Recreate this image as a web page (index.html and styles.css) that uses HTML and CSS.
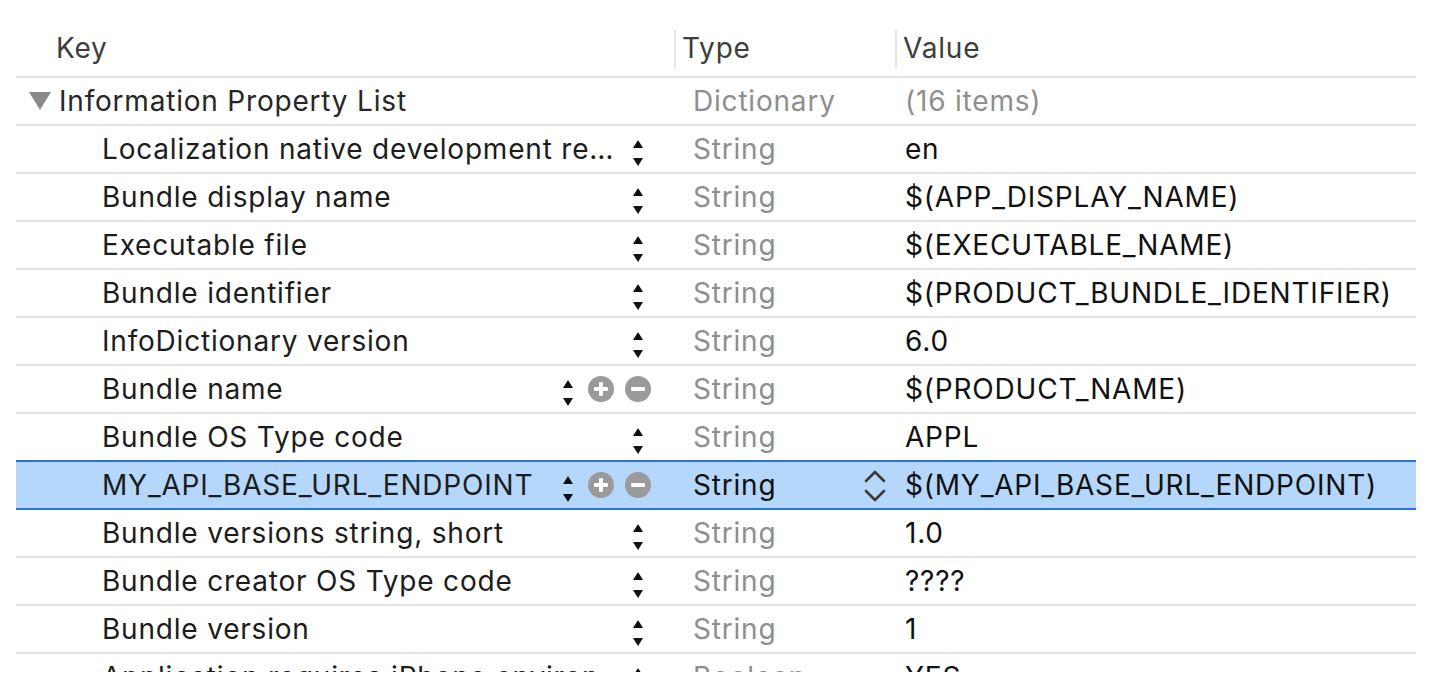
FILE: index.html
```html
<!DOCTYPE html>
<html>
<head>
<meta charset="utf-8">
<link rel="stylesheet" href="styles.css">
</head>
<body>
<div class="plist">
  <div class="head">
    <div class="hcell hkey">Key</div>
    <div class="hcell htype">Type</div>
    <div class="hcell hval">Value</div>
  </div>

  <div class="row">
    <div class="key root"><span class="disclosure"></span><span class="ktext">Information Property List</span></div>
    <div class="type">Dictionary</div>
    <div class="val dim">(16 items)</div>
  </div>

  <div class="row">
    <div class="key"><span class="ktext">Localization native development re…</span><span class="slot"><span class="stepper"></span></span></div>
    <div class="type">String</div>
    <div class="val">en</div>
  </div>
  <div class="row">
    <div class="key"><span class="ktext">Bundle display name</span><span class="slot"><span class="stepper"></span></span></div>
    <div class="type">String</div>
    <div class="val">$(APP_DISPLAY_NAME)</div>
  </div>
  <div class="row">
    <div class="key"><span class="ktext">Executable file</span><span class="slot"><span class="stepper"></span></span></div>
    <div class="type">String</div>
    <div class="val">$(EXECUTABLE_NAME)</div>
  </div>
  <div class="row">
    <div class="key"><span class="ktext">Bundle identifier</span><span class="slot"><span class="stepper"></span></span></div>
    <div class="type">String</div>
    <div class="val">$(PRODUCT_BUNDLE_IDENTIFIER)</div>
  </div>
  <div class="row">
    <div class="key"><span class="ktext">InfoDictionary version</span><span class="slot"><span class="stepper"></span></span></div>
    <div class="type">String</div>
    <div class="val">6.0</div>
  </div>
  <div class="row">
    <div class="key"><span class="ktext">Bundle name</span><span class="slot slot-step"><span class="stepper"></span></span><span class="slot slot-plus"><span class="circ plus"></span></span><span class="slot"><span class="circ minus"></span></span></div>
    <div class="type">String</div>
    <div class="val">$(PRODUCT_NAME)</div>
  </div>
  <div class="row">
    <div class="key"><span class="ktext">Bundle OS Type code</span><span class="slot"><span class="stepper"></span></span></div>
    <div class="type">String</div>
    <div class="val">APPL</div>
  </div>
  <div class="row selected">
    <div class="key"><span class="ktext">MY_API_BASE_URL_ENDPOINT</span><span class="slot slot-step"><span class="stepper"></span></span><span class="slot slot-plus"><span class="circ plus"></span></span><span class="slot"><span class="circ minus"></span></span></div>
    <div class="type"><span class="ttext">String</span>
      <svg class="popup" width="24" height="36" viewBox="0 0 24 36"><path d="M3 13 L12 4 L21 13 M3 23 L12 32 L21 23" fill="none" stroke="#3a3a3a" stroke-width="2.6" stroke-linecap="round" stroke-linejoin="round"/></svg>
    </div>
    <div class="val">$(MY_API_BASE_URL_ENDPOINT)</div>
  </div>
  <div class="row">
    <div class="key"><span class="ktext">Bundle versions string, short</span><span class="slot"><span class="stepper"></span></span></div>
    <div class="type">String</div>
    <div class="val">1.0</div>
  </div>
  <div class="row">
    <div class="key"><span class="ktext">Bundle creator OS Type code</span><span class="slot"><span class="stepper"></span></span></div>
    <div class="type">String</div>
    <div class="val">????</div>
  </div>
  <div class="row">
    <div class="key"><span class="ktext">Bundle version</span><span class="slot"><span class="stepper"></span></span></div>
    <div class="type">String</div>
    <div class="val">1</div>
  </div>
  <div class="row">
    <div class="key"><span class="ktext">Application requires iPhone environ…</span><span class="slot"><span class="stepper"></span></span></div>
    <div class="type">Boolean</div>
    <div class="val">YES</div>
  </div>
</div>
</body>
</html>
```

FILE: styles.css
```css
html, body {
  margin: 0;
  padding: 0;
  background: #ffffff;
}

body {
  font-family: Inter, "Liberation Sans", Arial, sans-serif;
  font-size: 28px;
  letter-spacing: 0.8px;
  color: #1c1c1c;
}

.plist {
  margin-left: 16px;
  width: 1400px;
  height: 672px;
  overflow: hidden;
}

.head {
  display: grid;
  grid-template-columns: 659px 221px 520px;
  height: 76px;
  border-bottom: 2px solid #e3e3e3;
  align-items: end;
}

.hcell {
  color: #3d3d3d;
  height: 39px;
  margin-bottom: 7px;
  display: flex;
  align-items: center;
  box-sizing: border-box;
  padding-bottom: 4px;
}

.hkey { padding-left: 40px; }
.htype { padding-left: 6px; border-left: 2px solid #e6e6e6; margin-left: -1px; }
.hval { padding-left: 6px; border-left: 2px solid #e6e6e6; margin-left: -1px; }

.row {
  display: grid;
  grid-template-columns: 659px 221px 520px;
  height: 46px;
  border-bottom: 2px solid #e3e3e3;
  align-items: center;
}

.row.selected {
  background: #b5d7fb;
  border-top: 2px solid #2a72d4;
  border-bottom: 2px solid #2a72d4;
  margin-top: -2px;
}

.key {
  display: flex;
  align-items: center;
  padding-left: 86px;
  padding-right: 24px;
  height: 46px;
  min-width: 0;
}

.key.root {
  padding-left: 13px;
}

.disclosure {
  width: 0;
  height: 0;
  border-left: 11px solid transparent;
  border-right: 11px solid transparent;
  border-top: 18px solid #8a8a8a;
  margin-right: 8px;
  flex: none;
}

.ktext {
  flex: 1;
  white-space: nowrap;
  overflow: hidden;
  min-width: 0;
}

.root .ktext { color: #262626; }

.slot {
  width: 26px;
  height: 46px;
  flex: none;
  display: flex;
  align-items: center;
  justify-content: center;
}

.slot-step { margin-right: 7px; }
.slot-plus { margin-right: 11px; }

.stepper {
  position: relative;
  width: 12px;
  height: 26px;
  margin-top: 8px;
}

.stepper::before,
.stepper::after {
  content: "";
  position: absolute;
  left: 1px;
  width: 0;
  height: 0;
  border-left: 5px solid transparent;
  border-right: 5px solid transparent;
}

.stepper::before {
  top: 0;
  border-bottom: 8px solid #111;
}

.stepper::after {
  bottom: 0;
  border-top: 8px solid #111;
}

.circ {
  position: relative;
  width: 26px;
  height: 26px;
  border-radius: 50%;
  background: #9a9a9a;
}

.circ::before,
.circ::after {
  content: "";
  position: absolute;
  background: #ffffff;
  border-radius: 1px;
}

.circ::before {
  left: 6px;
  top: 11px;
  width: 14px;
  height: 4px;
}

.plus::after {
  left: 11px;
  top: 6px;
  width: 4px;
  height: 14px;
}

.type {
  color: #8e8e8e;
  padding-left: 18px;
  display: flex;
  align-items: center;
  height: 46px;
  white-space: nowrap;
}

.selected .type { color: #111; }

.ttext { flex: 1; }

.popup {
  flex: none;
  margin-right: 9px;
  margin-top: 2px;
}

.val {
  padding-left: 9px;
  white-space: nowrap;
  color: #111;
}

.val.dim { color: #8e8e8e; }
```
